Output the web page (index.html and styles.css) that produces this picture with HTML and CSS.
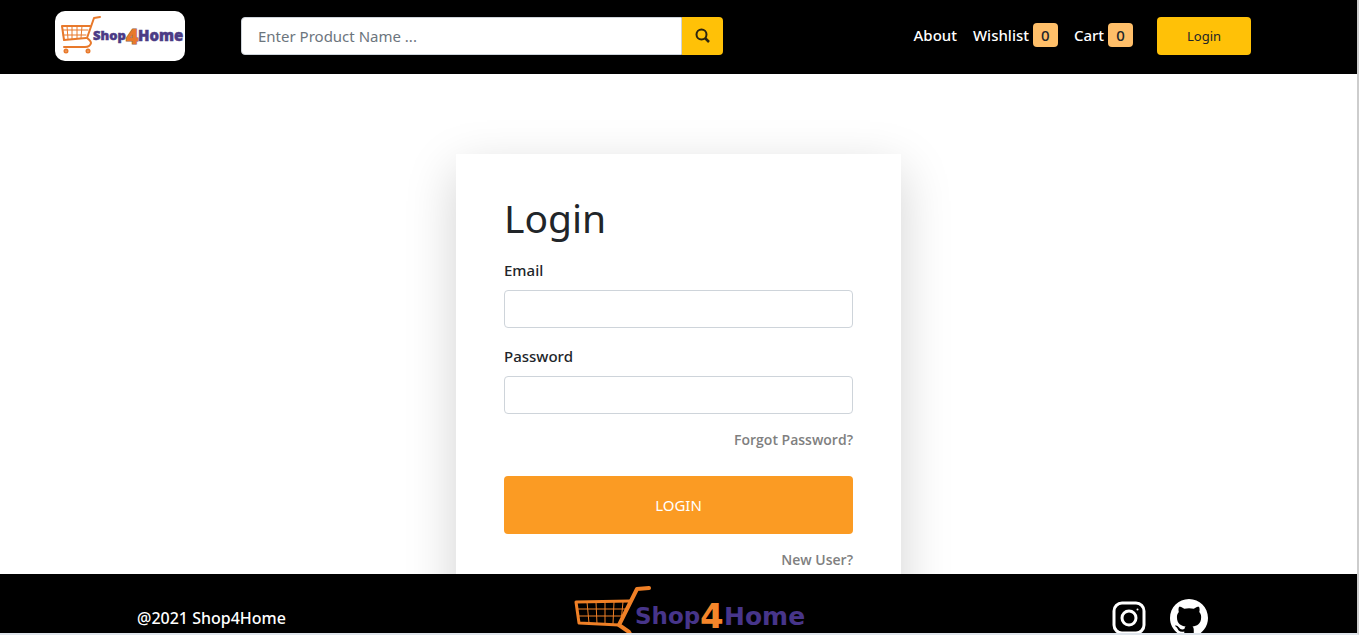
FILE: index.html
```html
<!DOCTYPE html>
<html lang="en">
<head>
<meta charset="utf-8">
<title>Shop4Home - Login</title>
<link rel="stylesheet" href="styles.css">
</head>
<body>
<div class="app">
  <header class="header">
    <a class="brand" href="#" aria-label="Shop4Home">
      <svg width="130" height="50" viewBox="0 0 130 50">
        <g fill="none" stroke="#e8792b" stroke-linecap="round" stroke-linejoin="round">
          <path stroke-width="2" d="M45 6l-6 1-7 20q4 3 4 5-1 4-6 4H9"/>
          <path stroke-width="2" d="M35 15L7 15l2 14 22-2"/>
          <path stroke-width="1" d="M12 15l1 13M17 15v13M22 15v12M27 15l-1 12M8 19h25M8 24h23"/>
          <circle stroke-width="2" cx="11" cy="40" r="1.500"/>
          <circle stroke-width="2" cx="33" cy="40" r="1.500"/>
        </g>
        <g class="mark">
          <text x="38" y="29" font-size="13" fill="#4b3b85" stroke="#4b3b85" stroke-width=".5">Shop</text>
          <text x="83" y="30" font-size="15" fill="#4b3b85" stroke="#4b3b85" stroke-width=".5">Home</text>
          <text x="71" y="33" font-size="21" fill="#e8792b" stroke="#8a5a50" stroke-width="1" paint-order="stroke">4</text>
        </g>
      </svg>
    </a>
    <form class="search">
      <input class="search-input" type="search" placeholder="Enter Product Name ..." aria-label="Product name">
      <button class="search-button" type="button" aria-label="Search">
        <svg width="16" height="16" viewBox="0 0 16 16" fill="none" stroke="#2b2410">
          <circle cx="6.500" cy="6.500" r="5" stroke-width="2"/><path d="M10 10l4 4" stroke-width="2.500"/>
        </svg>
      </button>
    </form>
    <nav class="nav">
      <a class="nav-link" href="#">About</a>
      <a class="nav-link" href="#">Wishlist <span class="badge">0</span></a>
      <a class="nav-link" href="#">Cart <span class="badge">0</span></a>
      <button class="nav-login" type="button">Login</button>
    </nav>
  </header>
  <main class="main">
    <form class="card">
      <h1 class="title">Login</h1>
      <label class="label" for="email">Email</label>
      <input class="field" id="email" type="email">
      <label class="label" for="password">Password</label>
      <input class="field" id="password" type="password">
      <a class="hint" href="#">Forgot Password?</a>
      <button class="submit" type="button">LOGIN</button>
      <a class="hint" href="#">New User?</a>
    </form>
  </main>
  <footer class="footer">
    <p class="copyright">@2021 Shop4Home</p>
    <svg class="footer-logo" width="234" height="64" viewBox="0 0 234 64">
      <g fill="none" stroke="#f08026" stroke-linecap="round" stroke-linejoin="round">
        <path stroke-width="4" d="M75 4L63 5 45 41l10 7q4 6-6 8H16"/>
        <path stroke-width="3" d="M56 17L2 18l3 21 40 2"/>
        <path stroke-width="1" d="M13 18l2 21M22 18l1 22M31 18v22M40 18l-1 22M49 18l-2 20M4 25h49M5 32h45"/>
      </g>
      <g class="mark mark-wide">
        <text x="61" y="40" font-size="23" fill="#47358a">Shop</text>
        <text x="150" y="41" font-size="25" fill="#47358a">Home</text>
        <text x="126" y="44" font-size="34" fill="#f5862a">4</text>
      </g>
    </svg>
    <div class="social">
      <a href="#" aria-label="Instagram">
        <svg width="34" height="34" viewBox="0 0 34 34" fill="none" stroke="#fff" stroke-width="3">
          <rect x="2" y="2" width="30" height="30" rx="8"/><circle cx="17" cy="17" r="7"/><circle cx="25.500" cy="8.500" r="1" fill="#fff" stroke="none"/>
        </svg>
      </a>
      <a href="#" aria-label="GitHub">
        <svg width="38" height="38" viewBox="0 0 16 16" fill="#fff"><path d="M8 0C3.580 0 0 3.580 0 8c0 3.540 2.290 6.530 5.470 7.590.4.070.55-.17.55-.38 0-.19-.01-.82-.01-1.490-2.010.37-2.530-.49-2.690-.94-.09-.23-.48-.94-.82-1.130-.28-.15-.68-.52-.01-.53.63-.01 1.080.58 1.230.82.72 1.210 1.870.87 2.330.66.070-.52.28-.87.51-1.070-1.780-.2-3.640-.89-3.640-3.950 0-.87.31-1.590.82-2.150-.08-.2-.36-1.020.08-2.120 0 0 .67-.21 2.200.82.64-.18 1.320-.27 2-.27s1.360.09 2 .27c1.530-1.040 2.200-.82 2.200-.82.44 1.100.16 1.920.08 2.120.51.56.82 1.270.82 2.150 0 3.070-1.870 3.750-3.650 3.950.29.25.54.73.54 1.480 0 1.070-.01 1.930-.01 2.200 0 .21.15.46.55.38A8 8 0 0 0 16 8c0-4.420-3.580-8-8-8z"/></svg>
      </a>
    </div>
  </footer>
</div>
</body>
</html>
```
FILE: styles.css
```css
* { box-sizing: border-box; }
body { margin: 0; font-family: "Noto Sans", sans-serif; font-size: 15px; line-height: 24px; color: #212529; }
a { color: inherit; text-decoration: none; }
button, input { font: inherit; }
button { border: 0; cursor: pointer; }
svg { display: block; }
.app { display: flex; flex-direction: column; height: 100vh; overflow: hidden; border-right: 2px solid #cdcdcd; border-bottom: 2px solid #dfe5ec; }
.header { display: flex; align-items: center; flex: none; gap: 56px; padding: 11px 106px 13px 55px; background: #000; }
.brand { flex: none; background: #fff; border-radius: 10px; }
.mark { font-family: "Noto Sans", sans-serif; font-weight: 900; }
.mark-wide { font-family: "DejaVu Sans", sans-serif; font-weight: 700; }
.search { display: flex; flex: 0 1 482px; height: 38px; }
.search-input { flex: 1; min-width: 0; padding: 0 16px; border: 1px solid #ced4da; border-radius: 4px 0 0 4px; color: #495057; outline: 0; }
.search-input::placeholder { color: #6c757d; opacity: 1; }
.search-button { display: flex; align-items: center; justify-content: center; width: 41px; padding: 0; background: #ffc107; border-radius: 0 4px 4px 0; }
.nav { display: flex; align-items: center; gap: 16px; margin-left: auto; color: #fff; font-weight: 500; white-space: nowrap; }
.nav-link { padding-bottom: 3px; }
.badge { display: inline-block; width: 25px; border-radius: 4px; background: #ffbf69; color: #212529; text-align: center; }
.nav-login { width: 94px; height: 38px; margin-left: 8px; background: #ffc107; border-radius: 4px; color: #212529; font-size: 13px; font-weight: 400; }
.main { flex: 1; min-height: 0; padding-top: 80px; overflow: hidden; }
.card { display: flex; flex-direction: column; width: 445px; max-width: 100%; margin: 0 auto; padding: 40px 48px 48px; background: #fff; box-shadow: 0 16px 48px rgba(0, 0, 0, .18); }
.title { margin: 0 0 16px; font-size: 39px; font-weight: 400; line-height: 48px; }
.label { margin-bottom: 8px; font-weight: 500; }
.field { height: 38px; margin-bottom: 16px; padding: 0 12px; border: 1px solid #ced4da; border-radius: 4px; }
.hint { align-self: flex-end; color: #808080; font-family: "Open Sans", "Noto Sans", sans-serif; font-size: 14px; font-weight: 600; line-height: 20px; }
.submit { height: 58px; margin: 26px 0 16px; background: #fb9b23; border-radius: 4px; color: #fff; }
.footer { display: grid; grid-template-columns: 12fr auto 11fr; align-items: start; flex: 0 0 59px; overflow: hidden; padding: 10px 149px 0 137px; background: #000; color: #fff; }
.copyright { margin: 22px 0 0; font-size: 16px; font-weight: 500; }
.social { display: flex; align-items: center; justify-content: flex-end; gap: 24px; margin-top: 15px; }
```
